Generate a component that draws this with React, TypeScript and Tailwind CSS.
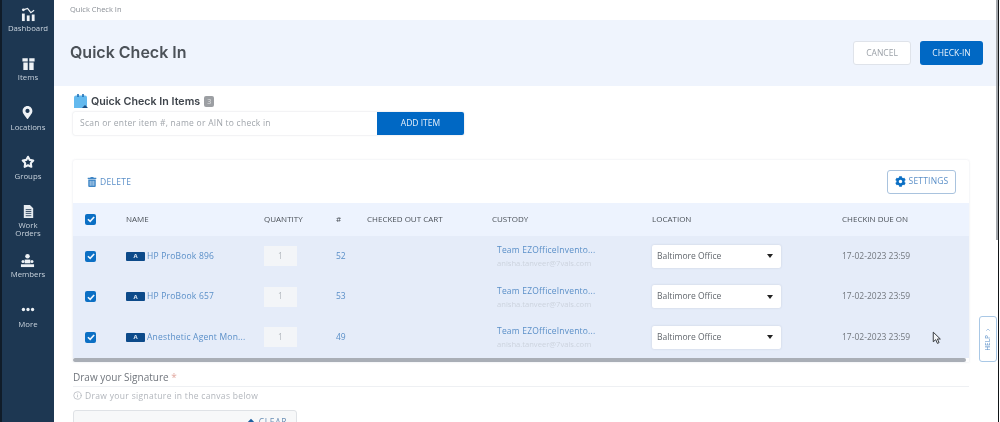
import { ChevronUp, Info } from "lucide-react";
import { FaCog, FaMapMarkerAlt, FaTrashAlt } from "react-icons/fa";

const font = "font-['Open_Sans',sans-serif]";
const gridCols = "grid grid-cols-[53px_138px_72px_31px_125px_160px_190px_1fr] items-center";

function Check() {
  return (
    <span className="flex h-[11px] w-[11px] items-center justify-center rounded-[2px] bg-[#0b6fc4]">
      <svg viewBox="0 0 12 12" className="h-[10px] w-[10px]" fill="none" stroke="#eef5fd" strokeWidth="2">
        <path d="M2.3 6.3 5 8.7 9.8 3.6" />
      </svg>
    </span>
  );
}

function NavItem({ icon, label }: { icon: React.ReactNode; label: React.ReactNode }) {
  return (
    <div className="flex h-[49.3px] flex-col items-center">
      <div className="flex h-[18px] items-center justify-center">{icon}</div>
      <div className="mt-[1px] text-center text-[7.8px] font-medium leading-[8px] text-[#c9d3dd]">{label}</div>
    </div>
  );
}

const rows = [
  { name: "HP ProBook 896", num: "52" },
  { name: "HP ProBook 657", num: "53" },
  { name: "Anesthetic Agent Mon...", num: "49" },
];

export default function App() {
  return (
    <div className={`flex h-[422px] w-[1000px] overflow-hidden bg-white blur-[0.35px] ${font}`}>
      <aside className="flex w-[54px] shrink-0 flex-col items-center border-l-[2px] border-[#101c29] bg-[#1d3752] pt-[5px]">
        <NavItem
          label="Dashboard"
          icon={
            <svg viewBox="0 0 16 16" className="h-[15px] w-[15px]" fill="#eef2f6">
              <rect x="1" y="7" width="3" height="8" />
              <rect x="6.2" y="9" width="3" height="6" />
              <rect x="11.5" y="8" width="3" height="7" />
              <circle cx="2.5" cy="3" r="1.5" />
              <path d="M2.500 3 7 1.500l3.500 4.500 3.500-2.500" fill="none" stroke="#eef2f6" strokeWidth="1.300" />
            </svg>
          }
        />
        <NavItem
          label="Items"
          icon={
            <svg viewBox="0 0 16 16" className="h-[15px] w-[15px]" fill="#eef2f6">
              <path d="M1.500 2.500h5.700v3.300H1.500ZM8.800 2.500h5.700v3.300H8.800ZM2.500 6.800h4.700V15H2.500ZM8.800 6.800h4.700V15H8.800Z" />
            </svg>
          }
        />
        <NavItem label="Locations" icon={<FaMapMarkerAlt className="h-[13px] w-[13px] text-[#eef2f6]" />} />
        <NavItem
          label="Groups"
          icon={
            <svg viewBox="0 0 16 16" className="h-[14px] w-[14px]" fill="none" stroke="#eef2f6" strokeWidth="2.400" strokeLinejoin="round">
              <path d="M8 2 10 5.600l4 .7-2.800 3 .6 4.200L8 11.800l-3.800 1.700.6-4.200L2 6.300l4-.7Z" />
            </svg>
          }
        />
        <NavItem
          label={<>Work<br />Orders</>}
          icon={
            <svg viewBox="0 0 16 16" className="h-[15px] w-[15px]">
              <path d="M3 1h6.500L13 4.500V15H3Z" fill="#e6ebf0" />
              <path d="M5 6h6M5 8h6M5 10h6M5 12.500h6" stroke="#1d3752" strokeWidth="0.900" />
            </svg>
          }
        />
        <NavItem
          label="Members"
          icon={
            <svg viewBox="0 0 16 16" className="h-[15px] w-[15px]" fill="#eef2f6">
              <circle cx="8" cy="3.500" r="2.400" />
              <path d="M5 7h6v4H5Z" />
              <circle cx="3.200" cy="9" r="1.600" />
              <circle cx="12.800" cy="9" r="1.600" />
              <path d="M1 15v-3h14v3Z" />
            </svg>
          }
        />
        <NavItem
          label="More"
          icon={
            <svg viewBox="0 0 16 6" className="h-[5px] w-[14px]" fill="#eef2f6">
              <circle cx="2.500" cy="3" r="2" />
              <circle cx="8" cy="3" r="2" />
              <circle cx="13.500" cy="3" r="2" />
            </svg>
          }
        />
      </aside>

      <main className="relative min-w-0 flex-1 overflow-hidden">
        <div className="flex h-[20px] items-start pl-[16px] pt-[4px] text-[7.5px] leading-[10px] text-[#8a8f96]">Quick Check In</div>

        <div className="flex h-[66px] items-center justify-between bg-[#eff4fd] pl-[16px] pr-[17px]">
          <h1 className="mb-[2px] font-['Inter',sans-serif] text-[16px] font-semibold text-[#4b5158]">Quick Check In</h1>
          <div className="flex gap-[9px]">
            <button className="flex h-[24px] w-[58px] items-center justify-center rounded-[3px] border border-[#dfe3ea] bg-white text-[8.5px] font-medium text-[#9ba1a8]">CANCEL</button>
            <button className="flex h-[24px] w-[63px] items-center justify-center rounded-[3px] bg-[#0068c4] text-[8.5px] font-medium text-[#eaf3fb]">CHECK-IN</button>
          </div>
        </div>

        <div className="pl-[19px] pr-[31px]">
          <div className="flex h-[22px] items-end">
            <svg viewBox="0 0 16 16" className="mb-[-1px] h-[16px] w-[16px]">
              <path d="M1 4.500A2 2 0 0 1 3 2.500h9a2 2 0 0 1 2 2V15H1Z" fill="#63b9ee" />
              <path d="M5 1v3M10 1v3" stroke="#1f6fb5" strokeWidth="1.600" />
              <path d="m9 15 3-3 3 3Z" fill="#1d4f83" />
            </svg>
            <span className="ml-[2px] font-['Inter',sans-serif] text-[10.7px] font-semibold leading-[13px] text-[#3e444b]">Quick Check In Items</span>
            <span className="mb-[1px] ml-[4px] flex h-[11px] w-[10px] items-center justify-center rounded-[2px] bg-[#9c9fa3] text-[7px] leading-none text-[#e4e5e6]">3</span>
          </div>

          <div className="mt-[4px] flex h-[23px] w-[391px] rounded-[2px] shadow-[0_0_2px_rgba(120,130,150,0.35)]">
            <div className="flex flex-1 items-center pl-[7px] text-[8.5px] tracking-[0.25px] text-[#a0a5ab]">Scan or enter item #, name or AIN to check in</div>
            <button className="flex w-[87px] items-center justify-center rounded-r-[2px] bg-[#0068c4] text-[8.5px] font-medium text-[#e6f0fa]">ADD ITEM</button>
          </div>

          <section className="mt-[25px] w-[896px] rounded-t-[2px] shadow-[0_0_2px_rgba(150,160,180,0.3)]">
            <div className="flex h-[43px] items-center justify-between pl-[14px] pr-[13px]">
              <div className="mt-[1px] flex items-center gap-[3px] text-[8.5px] tracking-[0.3px] text-[#5a8fc8]">
                <FaTrashAlt className="h-[10px] w-[10px] text-[#3f86c6]" />
                DELETE
              </div>
              <button className="flex h-[24px] w-[69px] items-center justify-center gap-[3px] rounded-[3px] border border-[#a9c3de] text-[8.5px] tracking-[0.2px] text-[#5a8fc8]">
                <FaCog className="h-[11px] w-[11px] text-[#0b6fc4]" />
                SETTINGS
              </button>
            </div>

            <div className={`${gridCols} h-[33px] bg-[#edf3fe] pb-[1px] text-[8px] font-medium text-[#4b5158]`}>
              <div className="flex pl-[12px]"><Check /></div>
              <div>NAME</div>
              <div>QUANTITY</div>
              <div>#</div>
              <div>CHECKED OUT CART</div>
              <div>CUSTODY</div>
              <div>LOCATION</div>
              <div>CHECKIN DUE ON</div>
            </div>

            <div className="bg-[#e5ecf9]">
              {rows.map((r) => (
                <div key={r.num} className={`${gridCols} h-[40.5px] text-[8.5px]`}>
                  <div className="flex pl-[12px]"><Check /></div>
                  <div className="flex items-center gap-[2px]">
                    <span className="flex h-[9px] w-[19px] items-center justify-center rounded-[1px] bg-[#0c4a8a] text-[6px] font-bold leading-none text-[#dfe9f5]">A</span>
                    <span className="tracking-[0.2px] text-[#5a8fc8]">{r.name}</span>
                  </div>
                  <div>
                    <span className="flex h-[20px] w-[33px] items-center justify-center bg-[#f3f5f8] text-[#b4b9bf]">1</span>
                  </div>
                  <div className="text-[#5a8fc8]">{r.num}</div>
                  <div />
                  <div className="pl-[5px]">
                    <div className="tracking-[0.2px] leading-[12px] text-[#5a8fc8]">Team EZOfficeInvento...</div>
                    <div className="mt-[3px] text-[7.6px] leading-[9px] text-[#ccd3de]">anisha.tanveer@7vals.com</div>
                  </div>
                  <div>
                    <div className="flex h-[23px] w-[129px] items-center justify-between rounded-[2px] bg-white pl-[5px] pr-[8px] text-[#62676d] shadow-[0_0_2px_rgba(120,130,150,0.3)]">
                      Baltimore Office
                      <span className="h-0 w-0 border-x-[3px] border-t-[4px] border-x-transparent border-t-[#222]" />
                    </div>
                  </div>
                  <div className="text-[#72777e]">17-02-2023 23:59</div>
                </div>
              ))}
            </div>
            <div className="h-[4px] w-[893px] rounded-full bg-[#a9aeb6]" />
          </section>

          <div className="mt-[8px] border-b border-[#eef0f3] pb-[2px] text-[10px] leading-[14px] text-[#71767d]">
            Draw your Signature <span className="text-[#e2a9a0]">*</span>
          </div>
          <div className="mt-[3px] flex items-center gap-[3px] text-[8.5px] tracking-[0.32px] leading-[12px] text-[#b2b6bc]">
            <Info className="h-[9px] w-[9px]" />
            Draw your signature in the canvas below
          </div>
          <div className="mt-[8px] flex h-[30px] w-[224px] justify-end rounded-t-[3px] border border-[#dfe2e6] bg-[#f7f8f9] pr-[9px] pt-[5px] text-[8.5px] tracking-[0.6px] text-[#6b8fb5]">
            <span className="flex items-start gap-[4px] leading-[12px]">
              <svg viewBox="0 0 10 10" className="mt-[2px] h-[8px] w-[8px]" fill="#1d5f9f"><path d="M5 1 9 5 5 9 1 5Z" /></svg>
              CLEAR
            </span>
          </div>
        </div>

        <div className="absolute right-[3px] top-[316px] flex h-[46px] w-[18px] items-center justify-center rounded-[3px] border border-[#a9c8e6] bg-white">
          <span className="flex rotate-[-90deg] items-center gap-[2px] whitespace-nowrap text-[6.5px] text-[#5a8fc8]">
            HELP <ChevronUp className="h-[6px] w-[6px] rotate-90" />
          </span>
        </div>

        <svg viewBox="0 0 12 16" className="absolute left-[878px] top-[331px] h-[14px] w-[10px]" fill="#f3f5f8" stroke="#2a2d31" strokeWidth="1.100">
          <path d="M1.500 1v11.500l3-2.500 2 4.500 2-1-2-4.300H10Z" />
        </svg>

        <div className="absolute right-[2px] top-0 h-[240px] w-[2px] bg-[#a4a8ad]" />
        <div className="absolute right-[1px] top-0 h-full w-[1px] bg-[#111417]" />
      </main>
    </div>
  );
}
